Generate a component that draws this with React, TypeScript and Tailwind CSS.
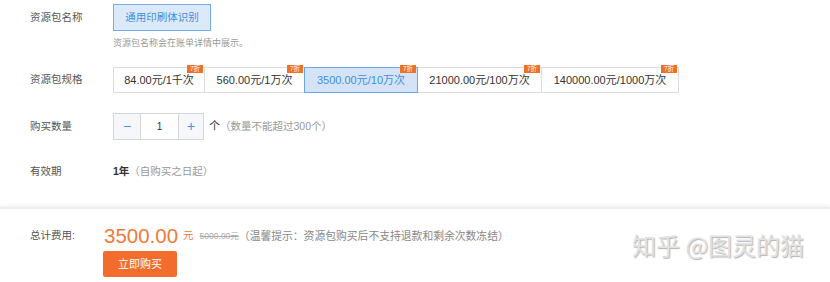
const specs = [
  { label: '84.00元/1千次', w: 'w-[92px]', active: false },
  { label: '560.00元/1万次', w: 'w-[101px]', active: false },
  { label: '3500.00元/10万次', w: 'w-[114px]', active: true },
  { label: '21000.00元/100万次', w: 'w-[125px]', active: false },
  { label: '140000.00元/1000万次', w: 'w-[138px]', active: false },
];

function Label({ children }: { children: React.ReactNode }) {
  return <div className="w-[83px] shrink-0 text-[10.5px] text-[#555]">{children}</div>;
}

export default function App() {
  return (
    <div className="relative w-[830px] h-[282px] overflow-hidden bg-white font-['Liberation_Sans','Noto_Sans_CJK_SC',sans-serif]">
      {/* form */}
      <div className="pl-[30px] pt-[4px]">
        {/* name */}
        <div className="flex items-start">
          <div className="w-[83px] shrink-0 text-[10.5px] leading-[27px] text-[#555]">资源包名称</div>
          <div>
            <div className="h-[27px] w-[98px] flex items-center justify-center border border-[#74aee9] bg-[#dce9f8] text-[10.5px] text-[#3f8fe3]">
              通用印刷体识别
            </div>
            <div className="mt-[6px] text-[9px] leading-[12px] text-[#999]">资源包名称会在账单详情中展示。</div>
          </div>
        </div>

        {/* spec */}
        <div className="mt-[18px] flex items-center">
          <Label>资源包规格</Label>
          <div className="flex">
            {specs.map((s, i) => (
              <div
                key={s.label}
                className={`relative h-[26px] ${s.w} flex items-center justify-center text-[11px] border ${
                  s.active
                    ? 'z-10 border-[#6aa5e6] bg-[#d4e4f6] text-[#3f8fe3]'
                    : 'border-[#dcdcdc] bg-white text-[#333]'
                } ${i > 0 ? '-ml-px' : ''}`}
              >
                {s.label}
                <span className="absolute right-[1px] top-[-3px] h-[8px] w-[16px] flex items-center justify-center bg-[#f07026] text-[6.5px] leading-none text-white">
                  7折
                </span>
              </div>
            ))}
          </div>
        </div>

        {/* count */}
        <div className="mt-[20px] flex items-center">
          <Label>购买数量</Label>
          <div className="flex h-[27px] border border-[#d6d6d6]">
            <div className="w-[27px] flex items-center justify-center bg-[#f5f7fa] text-[14px] text-[#4a90e2] border-r border-[#d6d6d6]">−</div>
            <div className="w-[37px] flex items-center justify-center bg-white text-[10px] text-[#333]">1</div>
            <div className="w-[25px] flex items-center justify-center bg-[#f5f7fa] text-[14px] text-[#4a90e2] border-l border-[#d6d6d6]">+</div>
          </div>
          <span className="ml-[5px] text-[11px] text-[#333]">个</span>
          <span className="text-[10.5px] text-[#999]">（数量不能超过300个）</span>
        </div>

        {/* validity */}
        <div className="mt-[22px] flex items-center h-[20px]">
          <Label>有效期</Label>
          <span className="text-[10.5px] font-bold text-[#333]">1年</span>
          <span className="text-[10.5px] text-[#999]">（自购买之日起）</span>
        </div>
      </div>

      {/* footer */}
      <div className="mt-[25px] border-t-2 border-[#eceef2] shadow-[0_-2px_3px_rgba(0,0,0,0.05)] pl-[30px] pt-[15px]">
        <div className="flex items-center h-[24px]">
          <div className="w-[74px] shrink-0 text-[10.5px] text-[#555]">总计费用:</div>
          <span className="text-[20.5px] leading-none text-[#ef7a3c]">3500.00</span>
          <span className="ml-[5px] text-[10.5px] text-[#ef7a3c]">元</span>
          <span className="ml-[6px] text-[8.5px] text-[#aaa] line-through">5000.00元</span>
          <span className="text-[10.8px] text-[#888]">（温馨提示：资源包购买后不支持退款和剩余次数冻结）</span>
        </div>
        <div className="mt-[3px] ml-[73px] h-[26px] w-[74px] flex items-center justify-center rounded-[2px] bg-[#f26d2d] text-[11px] text-white">
          立即购买
        </div>
      </div>

      {/* watermark */}
      <div className="absolute left-[632px] top-[230px] text-[24px] leading-[30px] text-[#e2e2e2] [text-shadow:1px_1px_1px_#b4b4b4] font-['Noto_Sans_CJK_SC',sans-serif]">
        知乎 @图灵的猫
      </div>
    </div>
  );
}
